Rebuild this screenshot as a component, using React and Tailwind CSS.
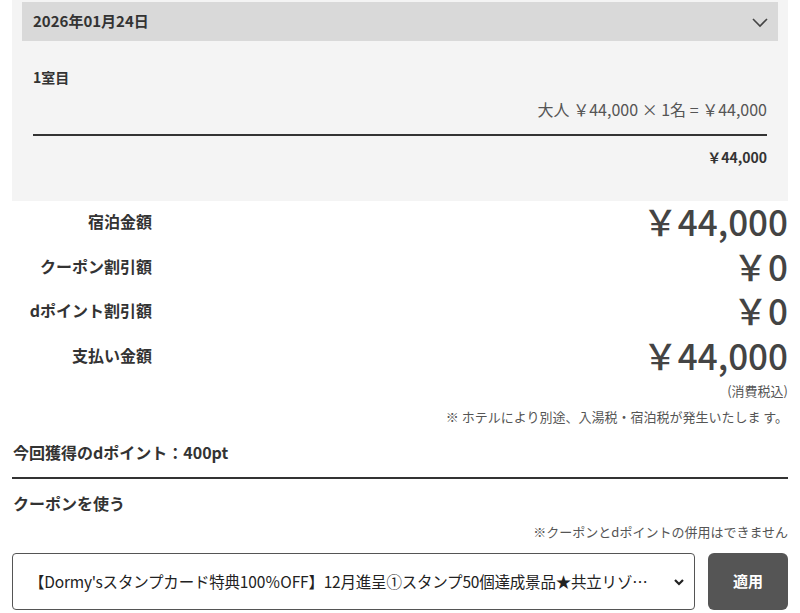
export default function App() {
  const rows = [
    ['宿泊金額', '￥44,000'],
    ['クーポン割引額', '￥0'],
    ['dポイント割引額', '￥0'],
    ['支払い金額', '￥44,000'],
  ];
  return (
    <div
      className="w-[800px] bg-white text-[#333]"
      style={{ fontFamily: '"Noto Sans CJK JP", "Noto Sans", sans-serif' }}
    >
      {/* reservation detail */}
      <div className="mx-3 bg-[#f4f4f4] px-[10px] pt-[2px] pb-[34px]">
        <div className="flex h-[39px] items-center justify-between bg-[#d9d9d9] pl-[11px] pr-[9px]">
          <span className="text-[15px] font-bold">2026年01月24日</span>
          <svg width="18" height="18" viewBox="0 0 18 18" fill="none" stroke="#444" strokeWidth="1.6">
            <path d="M2 6l7 7 7-7" />
          </svg>
        </div>
        <div className="px-[11px]">
          <div className="mt-[26px] text-[14px] font-bold leading-[20px]">1室目</div>
          <div className="mt-[12px] text-right text-[16px] leading-[20px] text-[#555]">
            大人 ￥44,000 × 1名 = ￥44,000
          </div>
          <div className="mt-[15px] h-[2px] bg-[#333]" />
          <div className="mt-[11px] text-right text-[14px] font-bold leading-[20px]">￥44,000</div>
        </div>
      </div>

      {/* totals */}
      <div className="-mt-[2px] px-3">
        {rows.map(([label, value]) => (
          <div key={label} className="flex h-[44.5px] items-center">
            <div className="w-[140px] text-right text-[16px] font-bold">{label}</div>
            <div className="flex-1 text-right text-[35px] font-medium leading-[40px] text-[#444]">{value}</div>
          </div>
        ))}
        <div className="mt-[5px] text-right text-[13px] leading-[18px] text-[#555]">(消費税込)</div>
        <div className="mt-[8px] text-right text-[13px] leading-[18px] text-[#555]">
          ※ ホテルにより別途、入湯税・宿泊税が発生いたしま す。
        </div>
        <div className="mt-[16px] pl-[1px] text-[16px] font-bold leading-[20px]">今回獲得のdポイント：400pt</div>
        <div className="mt-[15px] h-[2px] bg-[#333]" />
        <div className="mt-[14px] pl-[1px] text-[16px] font-bold leading-[20px]">クーポンを使う</div>
        <div className="mt-[10px] text-right text-[13px] leading-[18px] text-[#555]">
          ※クーポンとdポイントの併用はできません
        </div>
        <div className="mt-[12px] flex gap-[13px]">
          <div className="relative flex h-[57px] min-w-0 flex-1 items-center overflow-hidden rounded-[4px] border border-[#555] pl-[16px] pr-[30px]">
            <span className="whitespace-nowrap text-[15.5px] tracking-[-0.2px] text-[#222]">
              【Dormy'sスタンプカード特典100％OFF】12月進呈①スタンプ50個達成景品★共立リゾ…
            </span>
            <svg className="absolute right-[9px] top-[23px]" width="12" height="10" viewBox="0 0 12 10" fill="none" stroke="#222" strokeWidth="2.2">
              <path d="M2 3l4 4 4-4" />
            </svg>
          </div>
          <button className="h-[57px] w-[80px] shrink-0 rounded-[6px] bg-[#555] text-[15px] font-bold text-white">適用</button>
        </div>
      </div>
    </div>
  );
}
